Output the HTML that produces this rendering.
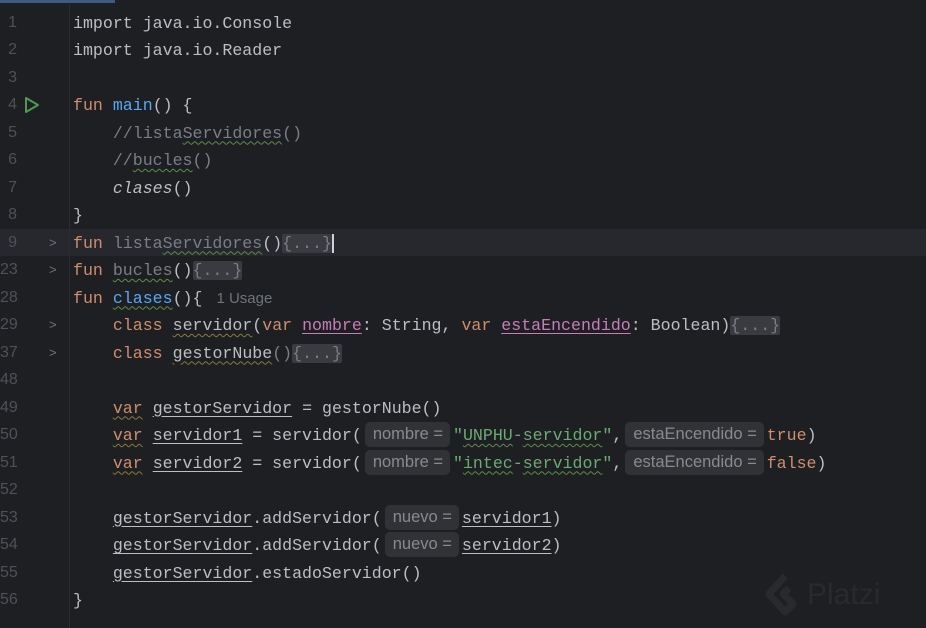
<!DOCTYPE html>
<html><head><meta charset="utf-8"><style>
body{margin:0;width:926px;height:628px;background:#1e1f22;overflow:hidden;position:relative;font-family:"Liberation Mono",monospace;}
.tab{position:absolute;left:0;top:0;width:115px;height:3px;background:#3d5a85;}
.gut{position:absolute;left:69px;top:4px;width:1px;height:624px;background:#2b2d30;}
.hl{position:absolute;left:0;top:229px;width:926px;height:27px;background:#26282e;}
.ln{position:absolute;left:0;width:17px;text-align:right;color:#4e5157;font-size:16px;font-family:"Liberation Sans",sans-serif;}
.fold{position:absolute;left:49px;color:#6f737a;font-size:13px;font-family:"Liberation Sans",sans-serif;}
.code{position:absolute;left:73px;white-space:pre;color:#bcbec4;font-size:16.6px;}
.k{color:#cf8e6d}.f{color:#56a8f5}.s{color:#6aab73}.c{color:#7a7e85}.p{color:#c77dbb}.g{color:#7a7e85}
.w{text-decoration:underline wavy #5f8c4a;text-decoration-thickness:1px;text-underline-offset:3px}
.wy{text-decoration:underline wavy #8a7a3a;text-decoration-thickness:1px;text-underline-offset:3px}
.u{text-decoration:underline;text-underline-offset:3px}
.fb{background:#393b40;color:#7a7e85;border-radius:2px}
.h{display:inline-block;background:#303236;color:#878a91;font-family:"Liberation Sans",sans-serif;font-size:16.5px;border-radius:5px;padding:0 7px 0 8px;line-height:25px;margin:0 3px;vertical-align:1px}
.us{color:#6f737a;font-family:"Liberation Sans",sans-serif;font-size:15px;margin-left:14px}
.i{font-style:italic}
</style></head><body>
<div class="tab"></div><div class="hl"></div><div class="gut"></div>
<div id="r"></div>
<svg style="position:absolute;left:23px;top:96px" width="18" height="18"><path d="M3 2 L15 9 L3 16 Z" fill="none" stroke="#4e9a50" stroke-width="2" stroke-linejoin="round"/></svg>
<div style="position:absolute;left:763px;top:572px;opacity:.08">
<svg width="44" height="46" style="vertical-align:middle"><path d="M22 4 L6 22 L22 40 L30 32 L20 22 L26 16" fill="none" stroke="#9aa" stroke-width="7" stroke-linejoin="round"/></svg><span style="color:#9aa;font-family:'Liberation Sans',sans-serif;font-size:30px;vertical-align:middle">Platzi</span></div>
<script>
const L=[
["1","",'import java.io.Console'],
["2","",'import java.io.Reader'],
["3","",''],
["4","",'<span class="k">fun</span> <span class="f">main</span>() {'],
["5","",'    <span class="c">//lista<span class="w">Servidores</span>()</span>'],
["6","",'    <span class="c">//<span class="w">bucles</span>()</span>'],
["7","",'    <span class="i">clases</span>()'],
["8","",'}'],
["9",">",'<span class="k">fun</span> <span class="g">lista<span class="w">Servidores</span></span>()<span class="fb">{...}</span><span style="border-left:2px solid #ced0d6"></span>'],
["23",">",'<span class="k">fun</span> <span class="g w">bucles</span>()<span class="fb">{...}</span>'],
["28","",'<span class="k">fun</span> <span class="f w">clases</span>(){<span class="us">1 Usage</span>'],
["29",">",'    <span class="k">class</span> <span class="wy">servidor</span>(<span class="k">var</span> <span class="p u">nombre</span>: String, <span class="k">var</span> <span class="p u">estaEncendido</span>: Boolean)<span class="fb">{...}</span>'],
["37",">",'    <span class="k">class</span> <span class="wy">gestorNube</span><span class="g">()</span><span class="fb">{...}</span>'],
["48","",''],
["49","",'    <span class="k wy">var</span> <span class="u">gestorServidor</span> = gestorNube()'],
["50","",'    <span class="k wy">var</span> <span class="u">servidor1</span> = servidor(<span class="h">nombre =</span><span class="s">"<span class="w">UNPHU</span>-<span class="w">servidor</span>"</span>,<span class="h">estaEncendido =</span><span class="k">true</span>)'],
["51","",'    <span class="k wy">var</span> <span class="u">servidor2</span> = servidor(<span class="h">nombre =</span><span class="s">"<span class="w">intec</span>-<span class="w">servidor</span>"</span>,<span class="h">estaEncendido =</span><span class="k">false</span>)'],
["52","",''],
["53","",'    <span class="u">gestorServidor</span>.addServidor(<span class="h">nuevo =</span><span class="u">servidor1</span>)'],
["54","",'    <span class="u">gestorServidor</span>.addServidor(<span class="h">nuevo =</span><span class="u">servidor2</span>)'],
["55","",'    <span class="u">gestorServidor</span>.estadoServidor()'],
["56","",'}']];
let h='';L.forEach((l,i)=>{const t=9.5+i*27.5;
h+=`<div class="ln" style="top:${t+4}px">${l[0]}</div>`;
if(l[1])h+=`<div class="fold" style="top:${t+5}px">&gt;</div>`;
h+=`<div class="code" style="top:${t}px;line-height:27px">${l[2]}</div>`;});
document.getElementById('r').innerHTML=h;
</script>
</body></html>
